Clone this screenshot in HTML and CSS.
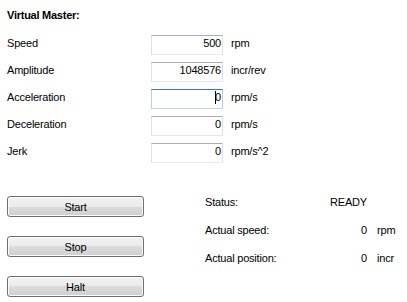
FILE: index.html
```html
<!DOCTYPE html>
<html lang="en">
<head>
  <meta charset="UTF-8">
  <title>Virtual Master</title>
  <link rel="stylesheet" href="styles.css">
</head>
<body>

  <div class="panel">
    <!-- Title -->
    <h2 class="title">Virtual Master:</h2>

    <!-- Parameters -->
    <div class="params">
      <div class="label">Speed</div>
      <div class="textbox">500</div>
      <div class="unit">rpm</div>

      <div class="label">Amplitude</div>
      <div class="textbox">1048576</div>
      <div class="unit">incr/rev</div>

      <div class="label">Acceleration</div>
      <div class="textbox focus"><span class="caret"></span>0</div>
      <div class="unit">rpm/s</div>

      <div class="label">Deceleration</div>
      <div class="textbox">0</div>
      <div class="unit">rpm/s</div>

      <div class="label">Jerk</div>
      <div class="textbox">0</div>
      <div class="unit">rpm/s^2</div>
    </div>

    <!-- Commands and status -->
    <div class="lower">
      <div class="buttons">
        <button class="btn">Start</button>
        <button class="btn">Stop</button>
        <button class="btn">Halt</button>
      </div>

      <div class="status">
        <div>Status:</div>
        <div class="value">READY</div>
        <div></div>

        <div>Actual speed:</div>
        <div class="value">0</div>
        <div>rpm</div>

        <div>Actual position:</div>
        <div class="value">0</div>
        <div>incr</div>
      </div>
    </div>
  </div>

</body>
</html>
```

FILE: styles.css
```css
/* Basic page styling */
body {
  margin: 0;
  padding: 0;
  background-color: #fff;
  color: #000;
  font-family: "Liberation Sans", Arial, sans-serif;
  font-size: 11px;
  letter-spacing: -0.2px;
}
.panel {
  padding-left: 7px;
}
.title {
  margin: 0;
  padding-top: 9px;
  font-size: 11px;
  line-height: 13px;
  font-weight: bold;
  letter-spacing: -0.25px;
}
/* Parameter grid */
.params {
  display: grid;
  grid-template-columns: 136px 72px auto;
  grid-auto-rows: 20px;
  column-gap: 8px;
  row-gap: 7px;
  margin-top: 13px;
}
.label,
.unit {
  padding-top: 1px;
  line-height: 15px;
}
.textbox {
  box-sizing: border-box;
  height: 20px;
  padding: 0 1px 0 3px;
  line-height: 15px;
  text-align: right;
  border: 1px solid #dbdfe6;
  border-top-color: #abadb3;
  border-bottom-color: #e3e9ef;
}
.textbox.focus {
  border-color: #b5cfe7;
  border-top-color: #3d7bad;
  border-bottom-color: #b7d9ed;
}
.caret {
  display: inline-block;
  width: 1px;
  height: 13px;
  margin-right: -1px;
  vertical-align: -3px;
  background-color: #000;
}
/* Buttons and status */
.lower {
  display: flex;
  margin-top: 33px;
}
.buttons {
  display: flex;
  flex-direction: column;
  gap: 19px;
  width: 137px;
}
.btn {
  box-sizing: border-box;
  height: 21px;
  padding: 0;
  border: 1px solid #707070;
  border-radius: 3px;
  background: linear-gradient(#f2f2f2 0%, #ebebeb 50%, #dddddd 50%, #cfcfcf 100%);
  box-shadow: inset 0 0 0 1px #fafafa;
  color: #000;
  font-family: inherit;
  font-size: 11px;
  letter-spacing: -0.2px;
}
.status {
  display: grid;
  grid-template-columns: 113px 39px auto;
  grid-auto-rows: 13px;
  column-gap: 10px;
  row-gap: 15px;
  margin-left: 61px;
  line-height: 13px;
}
.status .value {
  text-align: right;
}
```
